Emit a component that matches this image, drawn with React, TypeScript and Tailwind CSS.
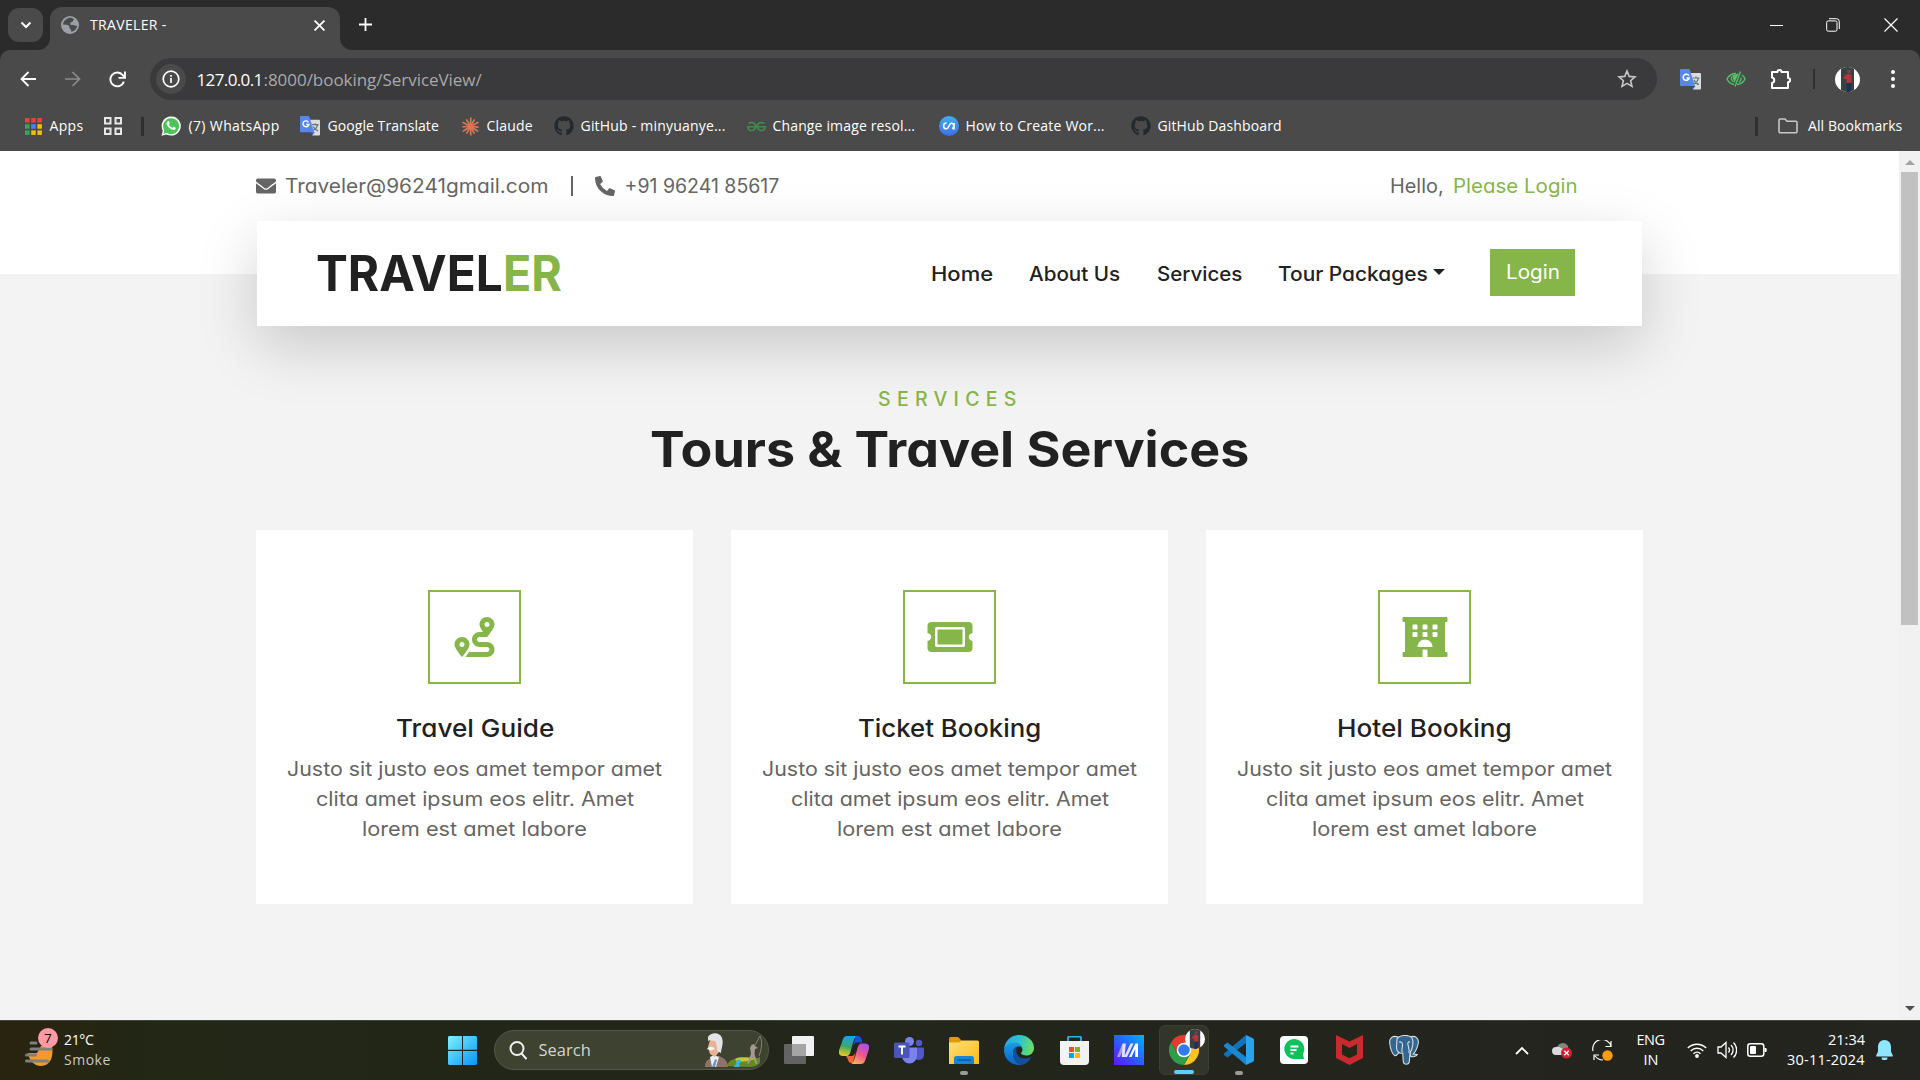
import React, { useLayoutEffect, useRef, useState } from "react";
import { FaEnvelope, FaPhoneAlt, FaRoute, FaTicketAlt, FaHotel, FaGithub } from "react-icons/fa";
import { SiGeeksforgeeks } from "react-icons/si";

/** Single line of text that spans `w` pixels, by tracking or, with `wide`, by widening the letters. */
function Fit({ w, children, className = "", wide = false }: { w: number; children: string; className?: string; wide?: boolean }) {
  const ref = useRef<HTMLSpanElement>(null);
  const [natural, setNatural] = useState(w);
  useLayoutEffect(() => {
    if (ref.current) setNatural(ref.current.offsetWidth);
  }, [w, children]);
  const tracking = (w - natural) / Math.max(1, children.length - 1);
  return (
    <span className={`relative inline-block shrink-0 whitespace-pre ${className}`} style={{ width: w }}>
      <span ref={ref} aria-hidden className="pointer-events-none invisible absolute top-0 left-0 w-max">
        {children}
      </span>
      <span
        className="inline-block origin-left"
        style={wide ? { transform: `scaleX(${w / natural})` } : { letterSpacing: `${tracking}px` }}
      >
        {children}
      </span>
    </span>
  );
}

const Translate = ({ className = "" }: { className?: string }) => (
  <svg viewBox="0 0 21 21" className={`shrink-0 ${className}`}>
    <path d="M8 4h12a1 1 0 0 1 1 1v14.5a1 1 0 0 1-1 1h-7z" fill="#dcdcdc" />
    <path d="M12.5 9h7M16 7.5V9M18.500 9c-.6 3-2.500 5-4.500 6M14 11c1 2.500 3 4 5 4.600" stroke="#61757f" strokeWidth="1.200" fill="none" />
    <path d="M11 17h4.500l-3 3.600z" fill="#2b4fc0" />
    <path d="M1 0h8.500l5.500 17H1a1 1 0 0 1-1-1V1a1 1 0 0 1 1-1z" fill="#5886ee" />
    <path d="M8.900 6.600A3.100 3.100 0 1 0 9.300 8.900H6.500" stroke="#fff" strokeWidth="1.500" fill="none" />
  </svg>
);

const Claude = () => (
  <svg viewBox="-10 -10 20 20" className="size-[19px] shrink-0" stroke="#d97757" strokeWidth="1.800" strokeLinecap="round">
    {[4, 33, 62, 88, 119, 148, 178, 208, 240, 272, 300, 331].map((a, i) => (
      <line key={a} x1="0" y1="0" x2={i % 2 ? 8.8 : 8} y2="0" transform={`rotate(${a})`} />
    ))}
  </svg>
);

const WhatsApp = () => (
  <svg viewBox="0 0 20 20" className="size-5 shrink-0">
    <path d="M.5 19.700l1.300-5A9.600 9.600 0 1 1 5.500 18.400z" fill="#fff" />
    <path d="M2.300 17.900l1-3.500A8 8 0 1 1 5.800 16.900z" fill="#4bc558" />
    <path d="M7 5.200c.5-.2.900 0 1.100.5l.6 1.400c.1.500-.6 1-.8 1.300.8 1.700 2 2.700 3.700 3.400.4-.3.800-1.200 1.300-1l1.700.9c.3.200.1 1.300-.5 1.800-2 1.500-6.200-1-8-4.200C5.200 7.600 5.800 5.800 7 5.200z" fill="#fff" />
  </svg>
);

const AppsGrid = () => (
  <svg viewBox="0 0 17 17" className="size-[17px] shrink-0">
    {["#ea4335", "#ea4335", "#ea4335", "#34a853", "#4285f4", "#fbbc04", "#34a853", "#fbbc04", "#fbbc04"].map((c, i) => (
      <rect key={i} x={(i % 3) * 6.2} y={Math.floor(i / 3) * 6.2} width="4.500" height="4.500" fill={c} />
    ))}
  </svg>
);

const Avatar = ({ className = "" }: { className?: string }) => (
  <svg viewBox="0 0 25 25" className={`shrink-0 ${className}`}>
    <defs>
      <clipPath id="avatar-clip"><circle cx="12.500" cy="12.500" r="12.500" /></clipPath>
    </defs>
    <g clipPath="url(#avatar-clip)">
      <rect width="25" height="25" fill="#fff" />
      <rect x="6" width="13" height="25" fill="#3a4145" />
      <circle cx="14" cy="4.500" r="2" fill="#6d4a3d" />
      <path d="M9.500 9l3.500-2.500 3.500 1.500v8h-5v-4H8.500z" fill="#b5343b" />
      <path d="M11.500 16h5l-1 9h-3.500z" fill="#1b3550" />
    </g>
  </svg>
);

const bookmarks: { icon: React.ReactNode; label: string; w: number; iconGap: string; after: string }[] = [
  { icon: <WhatsApp />, label: "(7) WhatsApp", w: 91, iconGap: "gap-2", after: "mr-[20px]" },
  { icon: <Translate className="size-5" />, label: "Google Translate", w: 111, iconGap: "gap-2", after: "mr-[22px]" },
  { icon: <Claude />, label: "Claude", w: 46, iconGap: "gap-[7px]", after: "mr-[21px]" },
  { icon: <FaGithub className="size-5 text-[#24292f]" />, label: "GitHub - minyuanye...", w: 145, iconGap: "gap-[7px]", after: "mr-[21px]" },
  { icon: <SiGeeksforgeeks className="size-[19px] text-[#3f8d4a]" />, label: "Change image resol...", w: 143, iconGap: "gap-[7px]", after: "mr-[23px]" },
  {
    icon: (
      <svg viewBox="0 0 20 20" className="size-5">
        <defs><linearGradient id="cu" x1="0" y1="0" x2="0" y2="1"><stop stopColor="#3db0f0" /><stop offset="1" stopColor="#3f6fe8" /></linearGradient></defs>
        <circle cx="10" cy="10" r="10" fill="url(#cu)" />
        <path d="M7.500 7a2.900 2.900 0 1 0 0 5.800c2.500 0 2.500-5.600 5-5.600 1.500 0 2.300 1 2.300 2.300 0 1.200-.4 2.300-1.500 3.300M15 7v6.500" fill="none" stroke="#fff" strokeWidth="1.600" />
      </svg>
    ),
    label: "How to Create Wor...", w: 139, iconGap: "gap-[7px]", after: "mr-[26px]",
  },
  { icon: <FaGithub className="size-5 text-[#24292f]" />, label: "GitHub Dashboard", w: 124, iconGap: "gap-[7px]", after: "" },
];

function TabStrip() {
  return (
    <div className="flex h-[50px] bg-[#2b2b2b]">
      <div className="mt-2 ml-2 grid h-[34px] w-[35px] place-items-center rounded-[11px] bg-[#4a4a4a]">
        <svg viewBox="0 0 12 8" className="h-2 w-3" fill="none" stroke="#fff" strokeWidth="2"><path d="M1.500 1.500L6 6l4.500-4.500" /></svg>
      </div>
      <svg viewBox="0 0 12 12" className="-ml-[5px] size-3 self-end"><path d="M12 0v12H0A12 12 0 0 0 12 0z" fill="#4a4a4a" /></svg>
      <div className="mt-[7px] flex h-[43px] w-[290px] items-center rounded-t-[12px] bg-[#4a4a4a] pb-[7px]">
        <svg viewBox="0 0 18 18" className="ml-[11px] size-[18px]">
          <circle cx="9" cy="9" r="9" fill="#9aa0a6" />
          <path d="M7.500 2C4.500 2.800 2.200 5.500 2 8.500l3.500.2c1.800.2 3 1 3 2.500v1.300l1.500.8.200 2.500c3.200-.4 5.600-3 6-6-1.700.4-2.500-.6-3.500-.8l-2.500-.1c-1-.4-1.300-1.500-.5-2.300.6-.7 1.500-.2 1.900-1.100.4-1 .8-1.800 1.400-2.300A7 7 0 0 0 7.500 2z" fill="#4a4a4a" />
        </svg>
        <Fit w={76} className="ml-[11px] text-sm text-white">TRAVELER -</Fit>
        <svg viewBox="0 0 10 10" className="mr-[15px] ml-auto size-[11px]" stroke="#fff" strokeWidth="1.600"><path d="M.5.5l9 9M9.500.5l-9 9" /></svg>
      </div>
      <svg viewBox="0 0 12 12" className="size-3 self-end"><path d="M0 0v12h12A12 12 0 0 1 0 0z" fill="#4a4a4a" /></svg>
      <svg viewBox="0 0 13 13" className="mt-[18px] ml-[7px] size-[13px]" stroke="#fff" strokeWidth="1.800"><path d="M6.500 0v13M0 6.500h13" /></svg>
      <div className="mt-[17px] ml-auto flex h-4 items-center">
        <div className="h-px w-[13px] bg-white" />
        <svg viewBox="0 0 14 14" className="mr-[44px] ml-[43px] size-[14px]" fill="none" stroke="#fff"><rect x=".7" y="2.900" width="10.300" height="10.300" rx="1.500" /><path d="M3 .7h7.500a2.800 2.800 0 0 1 2.800 2.800V11" /></svg>
        <svg viewBox="0 0 14 14" className="mr-[22px] size-[14px]" stroke="#fff" strokeWidth="1.200"><path d="M.5.5l13 13M13.500.5l-13 13" /></svg>
      </div>
    </div>
  );
}

function Toolbar() {
  return (
    <div className="flex h-[58px] items-center">
      <svg viewBox="0 0 16 16" className="ml-[19.5px] size-[16px]" fill="none" stroke="#fff" strokeWidth="1.800"><path d="M16 8H1.500M8.500 1L1.500 8l7 7" /></svg>
      <svg viewBox="0 0 16 16" className="ml-[29px] size-[16px]" fill="none" stroke="#8c8c8c" strokeWidth="1.700"><path d="M0 8h14.500M7.500 1l7 7-7 7" /></svg>
      <svg viewBox="0 0 16 16" className="ml-[28.5px] size-[17px]" fill="none" stroke="#fff" strokeWidth="1.800"><path d="M14 10A6.500 6.500 0 1 1 13 4L14.800 6" /><path d="M15 .5v6H9" /></svg>
      <div className="ml-[24px] flex h-[42px] w-[1507px] items-center rounded-full bg-[#3a3a3c]">
        <div className="ml-[6px] grid size-[30px] place-items-center rounded-full bg-[#4a4a4a]">
          <svg viewBox="0 0 18 18" className="size-[18px]" fill="none" stroke="#fff" strokeWidth="1.700"><circle cx="9" cy="9" r="7.800" /><path d="M9 8v5M9 5v1.800" /></svg>
        </div>
        <div className="mt-[2px] ml-[10.5px] flex text-[17px] leading-6">
          <Fit w={67} className="text-white">127.0.0.1</Fit>
          <Fit w={218} className="text-[#a9a9aa]">:8000/booking/ServiceView/</Fit>
        </div>
        <svg viewBox="0 0 20 20" className="mr-5 ml-auto size-5" fill="none" stroke="#c7c7c7" strokeWidth="1.600"><path d="M10 2l2.200 5.400 5.800.5-4.400 3.800 1.400 5.700-5-3-5 3 1.400-5.700L2 7.900l5.800-.5z" /></svg>
      </div>
      <Translate className="ml-[23px] size-[21px]" />
      <svg viewBox="0 0 20 16" className="ml-[25px] h-4 w-5" fill="none" stroke="#52c267" strokeWidth="1.400"><path d="M8 13.500C4.500 13 2 10 1 8c1.500-3 5-5.500 9-5.500M16 4c1.500 1 2.500 2.500 3 4-1.500 3-4.500 5.500-8 5.500M14.500 .5L9 15.500M5.500 5.500c-.5 2.500 .5 4.500 2 5.500M13 11.500c1.800-1.300 2.300-3 1.800-5" /><path d="M7 5l4.500-1.500L8.500 10z" fill="#52c267" /></svg>
      <svg viewBox="0 0 22 22" className="ml-[24px] size-[22px]" fill="none" stroke="#fff" strokeWidth="2" strokeLinejoin="round"><path d="M2 4h5.500a2 2 0 0 1 4 0H18v6a2 2 0 0 1 0 4.200V20H2v-5a2.800 2.800 0 0 0 0-5.500z" /></svg>
      <div className="ml-[21px] h-5 w-0.5 bg-[#2f2f2f]" />
      <Avatar className="ml-5 size-[25px]" />
      <svg viewBox="0 0 4 18" className="ml-[31px] h-[18px] w-1" fill="#fff"><circle cx="2" cy="2" r="2" /><circle cx="2" cy="9" r="2" /><circle cx="2" cy="16" r="2" /></svg>
    </div>
  );
}

function BookmarksBar() {
  return (
    <div className="mt-px flex h-[34px] items-center text-sm leading-5 text-white">
      <div className="w-[24.5px]" />
      <AppsGrid />
      <Fit w={34} className="ml-2">Apps</Fit>
      <svg viewBox="0 0 18 18" className="ml-5 size-[18px]" fill="none" stroke="#e8e8e8" strokeWidth="2"><path d="M1 1h5.500v5.500H1zM11.500 1H17v5.500h-5.500zM1 11.500h5.500V17H1zM11.500 11.500H17V17h-5.500z" /></svg>
      <div className="ml-[19px] h-[19px] w-[3px] bg-[#2f2f2f]" />
      <div className="w-[17px]" />
      {bookmarks.map((b) => (
        <div key={b.label} className={`flex items-center ${b.iconGap} ${b.after}`}>
          {b.icon}
          <Fit w={b.w}>{b.label}</Fit>
        </div>
      ))}
      <div className="ml-auto h-[19px] w-[3px] bg-[#2f2f2f]" />
      <svg viewBox="0 0 20 16" className="ml-5 h-4 w-5" fill="none" stroke="#c7c7c7" strokeWidth="1.600"><path d="M1 13.500V2.200A1.200 1.200 0 0 1 2.200 1H7l2 2.200h8.800A1.200 1.200 0 0 1 19 4.400v9.100a1.200 1.200 0 0 1-1.200 1.200H2.200A1.200 1.200 0 0 1 1 13.500z" /></svg>
      <Fit w={94} className="mr-[18px] ml-[10px]">All Bookmarks</Fit>
    </div>
  );
}

function SiteHeader() {
  return (
    <header className="relative z-10 h-[123px] bg-white pt-[15px]">
      <div className="mx-auto flex h-10 w-[1387px] items-center text-[19.500px] leading-10 text-[#656565]">
        <FaEnvelope className="size-5" />
        <Fit wide w={264} className="ml-[9px]">Traveler@96241gmail.com</Fit>
        <div className="ml-[22px] h-5 w-[1.5px] bg-[#656565]" />
        <FaPhoneAlt className="ml-[22px] size-5" />
        <Fit wide w={155} className="ml-[10px]">+91 96241 85617</Fit>
        <Fit wide w={54} className="ml-auto">Hello,</Fit>
        <Fit wide w={125} className="mr-[65px] ml-[9px] text-[#86b549]">Please Login</Fit>
      </div>
      <nav className="mx-auto mt-[15px] flex h-[105px] w-[1385px] items-center bg-white text-[19.500px] leading-10 font-medium text-[#212121] shadow-[0_20px_60px_rgba(0,0,0,0.175)]">
        <div className="ml-[59px] flex text-[49px] leading-[60px] font-bold">
          <Fit wide w={187}>TRAVEL</Fit>
          <Fit wide w={59} className="text-[#86b549]">ER</Fit>
        </div>
        <Fit wide w={62} className="ml-auto">Home</Fit>
        <Fit wide w={91} className="ml-[36px]">About Us</Fit>
        <Fit wide w={85} className="ml-[37px]">Services</Fit>
        <Fit wide w={150} className="ml-[36px]">Tour Packages</Fit>
        <svg viewBox="0 0 12 6" className="mb-[3px] ml-[5px] h-[6px] w-3" fill="#212121"><path d="M0 0h12L6 6z" /></svg>
        <div className="mr-[67px] mb-[2px] ml-[45px] grid h-[47px] w-[85px] place-items-center bg-[#86b549] pb-[2px] text-white">
          <Fit wide w={54} className="font-normal">Login</Fit>
        </div>
      </nav>
    </header>
  );
}

const services = [
  { icon: <FaRoute className="h-10 w-[41px]" />, title: "Travel Guide", w: 158 },
  { icon: <FaTicketAlt className="h-10 w-[46px]" />, title: "Ticket Booking", w: 183 },
  { icon: <FaHotel className="h-10 w-[46px]" />, title: "Hotel Booking", w: 175 },
];

const paragraph = [
  { t: "Justo sit justo eos amet tempor amet", w: 375 },
  { t: "clita amet ipsum eos elitr. Amet", w: 318 },
  { t: "lorem est amet labore", w: 225 },
];

function Services() {
  return (
    <section className="flex-1 bg-[#f3f3f3] pt-[110px]">
      <div className="flex flex-col items-center">
        <Fit w={138} className="mr-[5px] text-[19.5px] leading-[30px] font-medium text-[#86b549]">SERVICES</Fit>
        <Fit wide w={599} className="mt-[6px] text-[49px] leading-[60px] font-bold text-[#212121]">Tours &amp; Travel Services</Fit>
      </div>
      <div className="mx-auto mt-[50px] grid w-[1387px] grid-cols-3 gap-[38px]">
        {services.map((s) => (
          <article key={s.title} className="flex h-[374px] flex-col items-center bg-white pt-[60px]">
            <div className="grid h-[94px] w-[93px] place-items-center border-2 border-[#86b549] text-[#86b549]">{s.icon}</div>
            <Fit wide w={s.w} className="mt-[29px] text-[24.5px] leading-[30px] font-medium text-[#212121]">{s.title}</Fit>
            <div className="mt-[11px] flex flex-col items-center text-[19.500px] leading-[30px] text-[#656565]">
              {paragraph.map((l) => (
                <Fit wide key={l.t} w={l.w}>{l.t}</Fit>
              ))}
            </div>
          </article>
        ))}
      </div>
    </section>
  );
}

function Scrollbar() {
  return (
    <div className="flex w-[21px] flex-col items-center bg-[#f1f1f1] py-[9px]">
      <svg viewBox="0 0 10 5" className="h-[5px] w-[10px]" fill="#a3a3a3"><path d="M5 0l5 5H0z" /></svg>
      <div className="mt-[7px] h-[453px] w-[17px] bg-[#c1c1c1]" />
      <svg viewBox="0 0 10 5" className="mt-auto h-[5px] w-[10px]" fill="#505050"><path d="M5 5L0 0h10z" /></svg>
    </div>
  );
}

const WindowsLogo = () => (
  <svg viewBox="0 0 29 29" className="size-[29px]">
    <defs><linearGradient id="win" gradientUnits="userSpaceOnUse" x1="0" y1="0" x2="29" y2="29"><stop stopColor="#7df0ff" /><stop offset="1" stopColor="#0a94f8" /></linearGradient></defs>
    <path d="M1 0h13v13.700H0V1zM15 0h13l1 1v12.700H15zM0 15h14v14H1l-1-1zM15 15h14v13l-1 1H15z" fill="url(#win)" />
  </svg>
);

const SearchArt = () => (
  <svg viewBox="0 0 58 34" className="h-[34px] w-[58px]">
    <path d="M22 33c1-5 6-8 13-7s16 0 20-2v6c-3 3-6 4-12 4z" fill="#648a22" />
    <path d="M30 26c6-3 12-1 22-1l-8 3-12 1z" fill="#c4c935" />
    <path d="M32 27c4-1 6 2 3 3s2 2-1 4h-5c0-2 3-2 2-4z" fill="#35b9df" />
    <path d="M42 30l4-9-1-6 1.500-3 2.500-1 1 2 3 2-3 1-.5 5 3 10h-1.500l-3.500-7-4 7z" fill="#a39a91" />
    <path d="M49 14l6-11c2.500 5 2 12-1 20" fill="none" stroke="#989080" strokeWidth=".8" />
    <path d="M0 34c0-6 3-8 7-9l7-2c5 2 9 5 9 11z" fill="#927268" />
    <path d="M5 24l4-2 5 2-3 10H7z" fill="#e9eef3" />
    <path d="M10 26l2 1-2 7H7z" fill="#679bc2" />
    <path d="M5 7c4-4 10-3 11 2l-2 10-4 5-5-3-2-7z" fill="#e9b295" />
    <path d="M3 4c3-5 12-5 14 1 2 6-1 10-1 15l-4-2c1-4-1-5-1-9-2-2-4-1-6-2L3 8z" fill="#e4e4e8" />
    <path d="M2 16c2-3 6-3 8 0l-4 1.500z" fill="#f4f4f4" />
  </svg>
);

const TaskView = () => (
  <svg viewBox="0 0 30 28" className="h-7 w-[30px]">
    <rect x="8" y="0" width="22" height="20" rx="1" fill="#f1f1f1" />
    <rect x="0" y="8" width="22" height="20" rx="1" fill="#636363" />
    <rect x="8" y="8" width="14" height="12" fill="#a5a5a5" />
  </svg>
);

const Copilot = () => (
  <svg viewBox="0 0 30 28" className="h-7 w-[30px]">
    <defs>
      <linearGradient id="cpa" x1=".4" y1="0" x2=".2" y2="1"><stop stopColor="#16a4ef" /><stop offset=".5" stopColor="#3aa86a" /><stop offset="1" stopColor="#f7cc16" /></linearGradient>
      <linearGradient id="cpb" x1=".8" y1="0" x2=".3" y2="1"><stop stopColor="#a74ee8" /><stop offset=".55" stopColor="#f0598a" /><stop offset="1" stopColor="#ffad5a" /></linearGradient>
    </defs>
    <path d="M17 0h2c3 0 3.500 3 4.500 6.500h-5c-3 0-4 2-5 5z" fill="#1c50d4" />
    <path d="M8 0h10c-3 1-4 7-6 14-1 4-2 6-5 6H4c-4 0-5-3-3.500-7L4 3c.8-2 2-3 4-3z" fill="url(#cpa)" />
    <path d="M7 20h5c3 0 4-2 5-6l-3 13h-2C9 27 9 22 7 20z" fill="#f2643c" />
    <path d="M22 28H12c3-1 4-7 6-14 1-4 2-6.500 5-6.500h3c4 0 5 3 3.500 7L26 25c-.8 2-2 3-4 3z" fill="url(#cpb)" />
  </svg>
);

const Teams = () => (
  <svg viewBox="0 0 30 27" className="h-[27px] w-[30px]">
    <circle cx="25" cy="6" r="3.200" fill="#5059c9" />
    <circle cx="15.500" cy="4.500" r="4.500" fill="#7b83eb" />
    <path d="M21 10.500h8a1 1 0 0 1 1 1V18a5 5 0 0 1-8 4z" fill="#5059c9" />
    <path d="M9 10.500h13a1 1 0 0 1 1 1V19a7.500 7.500 0 0 1-15 0z" fill="#7b83eb" />
    <rect y="5.500" width="15.500" height="15.500" rx="1.500" fill="#4b53bc" />
    <path d="M4.500 9.500h7M8 9.500v8" stroke="#fff" strokeWidth="1.900" />
  </svg>
);

const Explorer = () => (
  <svg viewBox="0 0 30 27" className="h-[27px] w-[30px]">
    <defs><linearGradient id="fold" x1="0" y1="0" x2="1" y2="1"><stop stopColor="#ffe07a" /><stop offset="1" stopColor="#fbb916" /></linearGradient></defs>
    <path d="M0 1.500A1.500 1.500 0 0 1 1.500 0H9l4 4v4H0z" fill="#dd9b05" />
    <path d="M0 5.500h10l3-2h15.500A1.500 1.500 0 0 1 30 5v22H0z" fill="url(#fold)" />
    <path d="M5 27v-5.500A2.500 2.500 0 0 1 7.500 19h15a2.500 2.500 0 0 1 2.500 2.500V27z" fill="#1585d8" />
    <path d="M8 23h14" stroke="#0b5aa5" strokeWidth="1.500" />
  </svg>
);

const Edge = () => (
  <svg viewBox="0 0 30 30" className="size-[30px]">
    <defs>
      <linearGradient id="ea" x1="0" y1=".3" x2="1" y2=".5"><stop stopColor="#2aa6e6" /><stop offset=".5" stopColor="#2fc3d2" /><stop offset="1" stopColor="#6be05c" /></linearGradient>
      <linearGradient id="eb" x1="0" y1="0" x2="0" y2="1"><stop stopColor="#1b9de2" /><stop offset="1" stopColor="#0a62c4" /></linearGradient>
    </defs>
    <path d="M0 14C1 6 7 0 15 0c9 0 15 6 15 13 0 5-4 7.500-7.500 7.500-3 0-5.500-1-5.500-2.200 0-.8 1.500-1.300 1.500-3.500 0-3-3-5.500-7-5.500C5.500 9.300 1 12 0 14z" fill="url(#ea)" />
    <path d="M0 15c.5-5 6-7.500 11-7.500 4 0 7.500 3 7.500 6.500-.5-2-2-2.500-3.500-2.500-4 0-6 3.500-6 7C9 25 14 30 19 29.400c-1 .4-2.500.6-4 .6C7 30 0 24 0 15z" fill="url(#eb)" />
    <path d="M9 18c0-3 2-6 4.500-6.500C10 17 14 23.500 21 23.500c3 0 5-1 6.200-1.500C25 27 21 29.500 18 29.500 13 29.500 9 24 9 18z" fill="#124f9c" />
  </svg>
);

const Store = () => (
  <svg viewBox="0 0 29 29" className="size-[29px]">
    <path d="M8 6V1.500A1 1 0 0 1 9 .7h11a1 1 0 0 1 1 .8V6" fill="none" stroke="#2bb3e6" strokeWidth="1.800" />
    <path d="M0 5h29v20a4 4 0 0 1-4 4H4a4 4 0 0 1-4-4z" fill="#f3f3f3" />
    <path d="M9 11h5v5H9z" fill="#f25022" /><path d="M15 11h5v5h-5z" fill="#7fba00" />
    <path d="M9 17h5v5H9z" fill="#00a4ef" /><path d="M15 17h5v5h-5z" fill="#ffb900" />
  </svg>
);

const MyAsus = () => (
  <svg viewBox="0 0 30 30" className="size-[30px]">
    <defs><linearGradient id="asus" x1="0" y1="1" x2="1" y2="0"><stop stopColor="#6414ff" /><stop offset=".55" stopColor="#2368ff" /><stop offset="1" stopColor="#00b4ff" /></linearGradient></defs>
    <rect width="30" height="30" fill="url(#asus)" />
    <path d="M3 22L8 9.500h3L6 22z" fill="#a99cff" />
    <path d="M8.500 8.500h3.300L10.500 22H7.800zM10 22l6.500-13.500h3L13 22z" fill="#e6e0ff" />
    <path d="M15 22l6.500-13.500H24V22h-2.800v-8L17.500 22z" fill="#fff" />
  </svg>
);

const Chrome = () => (
  <svg viewBox="-15 -15 30 30" className="size-[30px]">
    <path d="M-13 -7.500A15 15 0 0 1 13 -7.500L0 -7.500-6.500 3.700z" fill="#e33b2e" />
    <path d="M13 -7.500A15 15 0 0 1 0 15L6.500 3.700 0-7.500z" fill="#fcc31c" />
    <path d="M0 15A15 15 0 0 1 -13 -7.500L-6.500 3.700H6.500z" fill="#2f9e4a" />
    <circle r="7.300" fill="#fff" /><circle r="5.800" fill="#2f7cf0" />
  </svg>
);

const VsCode = () => (
  <svg viewBox="0 0 30 30" className="size-[30px]">
    <path d="M22 0v8L3.500 22.500 0 20V18.500z" fill="#1272b8" />
    <path d="M22 30v-8L3.500 7.500 0 10v1.500z" fill="#1a87cf" />
    <path d="M22 0l7 3.200a2 2 0 0 1 1 1.700v20.200a2 2 0 0 1-1 1.700L22 30z" fill="#2aa4ee" />
  </svg>
);

const ChatApp = () => (
  <svg viewBox="0 0 28 28" className="size-7">
    <rect width="28" height="28" rx="4" fill="#fff" />
    <path d="M24 23h-10a10 10 0 1 1 9-5z" fill="#0fc15a" />
    <path d="M10.500 10.500h8M10.500 14h6M10.500 17.500h3" stroke="#fff" strokeWidth="2" />
  </svg>
);

const McAfee = () => (
  <svg viewBox="0 0 27 30" className="h-[30px] w-[27px]">
    <path d="M0 0l13.500 6.500L27 0v23l-13.500 7L0 23z" fill="#c92a2f" />
    <path d="M6 9l7.500 4L21 9v10.500l-7.500 3.800L6 19.500z" fill="#232716" />
  </svg>
);

const Postgres = () => (
  <svg viewBox="0 0 30 30" className="size-[30px]" stroke="#d7dee2" strokeWidth="1.100">
    <path d="M9 2C4 0 0 3 .7 8c.6 5 2.500 11 5 12.500 2 .8 3.500-2 4.500-4z" fill="#336791" />
    <path d="M21 2c5-2 9 1 8.300 6-1 5-3 9-5 11l4 .5c-1 2-5 3-7 1.500z" fill="#336791" />
    <path d="M8 4c2-4 12-5 15-1 2 4 .5 11-2 15l-.7 9c-.8 3-5.300 3-6 0l-.6-9c-4 1-6-2-6.200-5z" fill="#336791" />
    <path d="M10 7c2-.5 3.500.5 3.500 3s-1 4-.5 7M21 7c-2-.5-2.500 1-2 3s1.500 4 1 8" fill="none" />
  </svg>
);

function Slot({ children, active, mark }: { children: React.ReactNode; active?: boolean; mark?: string }) {
  return (
    <div className={`relative mr-[5px] grid h-[50px] w-[50px] shrink-0 place-items-center rounded-md ${active ? "border border-[#3b3e31] bg-[#32352a]" : ""}`}>
      {children}
      {mark && <div className={`absolute bottom-0 h-1 rounded-full ${mark}`} />}
    </div>
  );
}

function Taskbar() {
  return (
    <footer className="flex h-[60px] items-center border-t border-[#42453a] bg-linear-to-r from-[#29240f] via-[#222716] to-[#242420] from-0% via-8% pb-px text-white">
      <div className="flex w-[437.5px] items-center">
        <div className="relative ml-[25px] h-[34px] w-[34px]">
          <svg viewBox="0 0 34 34" className="size-[34px]">
            <path d="M3 20h9l4-7h11c2 11-2 20-11 20C9 33 4 27 3 20z" fill="#f59a24" />
            <path d="M6 10h5M6 16h20M1.500 22h9M1.500 28h21" stroke="#7e7f80" strokeWidth="3" strokeLinecap="round" />
          </svg>
          <div className="absolute -top-[5px] left-[13px] grid size-5 place-items-center rounded-full bg-[#ff99a4] text-[13px] leading-5 text-black">7</div>
        </div>
        <div className="ml-[5px] flex flex-col text-[14px] leading-[20px]">
          <Fit w={30}>21°C</Fit>
          <Fit w={46} className="text-[#c9cac5]">Smoke</Fit>
        </div>
      </div>
      <Slot><WindowsLogo /></Slot>
      <div className="ml-px flex h-10 w-[275px] items-center rounded-full border border-[#54584a] bg-[#3d4231]">
        <svg viewBox="0 0 18 19" className="ml-[14px] h-[19px] w-[18px]" fill="none" stroke="#f0f0f0" strokeWidth="2"><circle cx="8" cy="7.500" r="6.500" /><path d="M12.500 12.500l5 5.500" /></svg>
        <Fit w={52} className="ml-[12px] text-[16.500px] leading-6 text-[#d4d5d0]">Search</Fit>
        <div className="mr-[5px] ml-auto"><SearchArt /></div>
      </div>
      <div className="ml-[5.5px] flex items-center">
        <Slot><TaskView /></Slot>
        <Slot><Copilot /></Slot>
        <Slot><Teams /></Slot>
        <Slot mark="w-2 bg-[#9b9c95]"><Explorer /></Slot>
        <Slot><Edge /></Slot>
        <Slot><Store /></Slot>
        <Slot><MyAsus /></Slot>
        <Slot active mark="w-5 bg-[#60cdff]">
          <Chrome />
          <div className="absolute top-[3px] right-[3px]"><Avatar className="size-5" /></div>
        </Slot>
        <Slot mark="w-2 bg-[#9b9c95]"><VsCode /></Slot>
        <Slot><ChatApp /></Slot>
        <Slot><McAfee /></Slot>
        <Slot><Postgres /></Slot>
      </div>
      <div className="mr-[27px] ml-auto flex items-center">
        <svg viewBox="0 0 14 9" className="h-[9px] w-[14px]" fill="none" stroke="#fff" strokeWidth="1.800"><path d="M1 8l6-6 6 6" /></svg>
        <svg viewBox="0 0 21 18" className="ml-[23px] h-[18px] w-[21px]">
          <path d="M5 7a6 6 0 0 1 11-2l1 8H4z" fill="#858585" /><path d="M4 14a4 4 0 0 1 0-8c3-1 5 1 9 3v5z" fill="#d9d9d9" />
          <circle cx="14.500" cy="12" r="5.500" fill="#d51f35" /><path d="M12.300 9.800l4.400 4.400M16.700 9.800l-4.400 4.400" stroke="#fff" strokeWidth="1.300" />
        </svg>
        <svg viewBox="0 0 21 21" className="ml-[19px] size-[21px]">
          <path d="M1 11A9.200 9.200 0 0 1 19 6.500M19 1v5.500h-5.500M2 20v-5h5M3 16c2 2.500 5 4 8 4" fill="none" stroke="#fff" strokeWidth="1.200" />
          <circle cx="15.500" cy="15.500" r="5.200" fill="#ff9b0a" />
        </svg>
        <div className="ml-[23px] flex w-[30px] flex-col items-center text-[14.500px] leading-5"><Fit w={29}>ENG</Fit><Fit w={15}>IN</Fit></div>
        <svg viewBox="0 0 20 16" className="ml-[21px] h-4 w-5" fill="none" stroke="#fff" strokeWidth="1.400"><path d="M.8 6a13 13 0 0 1 18.400 0M3.700 8.900a8.900 8.900 0 0 1 12.600 0M6.500 11.700a5 5 0 0 1 7 0" /><circle cx="10" cy="14" r="1.200" fill="#fff" /></svg>
        <svg viewBox="0 0 20 18" className="ml-[10px] h-[18px] w-5" fill="none" stroke="#fff" strokeWidth="1.300"><path d="M1 6h3l5-4.500v15L4 12H1zM11.500 6.500a4 4 0 0 1 0 5M14 4a7 7 0 0 1 0 10M16.500 1.500a10.500 10.500 0 0 1 0 15" /></svg>
        <svg viewBox="0 0 20 14" className="ml-[10px] h-[14px] w-5"><rect x=".8" y=".8" width="16" height="12.400" rx="2.500" fill="none" stroke="#fff" strokeWidth="1.500" /><rect x="3" y="3" width="6" height="8" rx="1" fill="#fff" /><path d="M17.500 5h1.200a1 1 0 0 1 1 1v2a1 1 0 0 1-1 1h-1.200z" fill="#fff" /></svg>
        <div className="ml-[20px] flex flex-col items-end text-[14.500px] leading-5"><Fit w={37}>21:34</Fit><Fit w={78}>30-11-2024</Fit></div>
        <svg viewBox="0 0 17 20" className="ml-[11px] h-5 w-[17px]" fill="#8fe6ff"><path d="M8.500 0C4.500 0 2 3 2 7v4.500L.2 15.500c-.2.500 0 1 .6 1h15.400c.6 0 .8-.5.600-1L15 11.500V7c0-4-2.500-7-6.500-7z" /><path d="M5.500 17.500h6a3 3 0 0 1-6 0z" /></svg>
      </div>
    </footer>
  );
}

export default function App() {
  return (
    <div className="flex h-[1080px] w-[1920px] flex-col overflow-hidden font-['Open_Sans',sans-serif]">
      <div className="h-[151px] shrink-0 bg-[#2b2b2b]">
        <TabStrip />
        <div className="h-[101px] rounded-t-[10px] bg-[#4a4a4a]">
          <Toolbar />
          <BookmarksBar />
        </div>
      </div>
      <div className="flex h-[869px] shrink-0">
        <main className="flex w-[1899px] flex-col font-['Inter',sans-serif] [font-feature-settings:'cv11']">
          <SiteHeader />
          <Services />
        </main>
        <Scrollbar />
      </div>
      <Taskbar />
    </div>
  );
}
